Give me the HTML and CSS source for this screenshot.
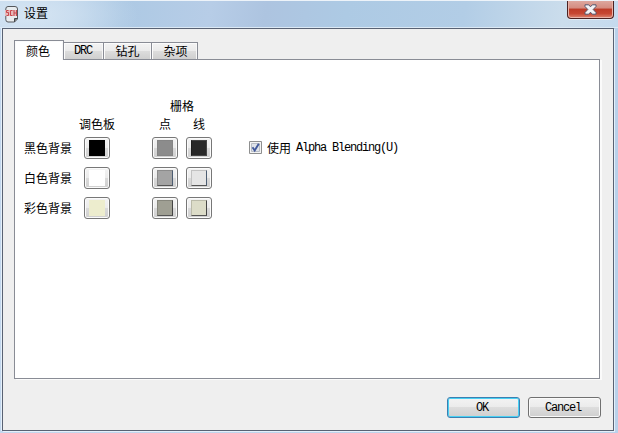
FILE: index.html
```html
<!DOCTYPE html>
<html lang="zh-CN">
<head>
<meta charset="utf-8">
<title>设置</title>
<link rel="stylesheet" href="styles.css">
</head>
<body>
<div class="window">
  <header class="titlebar">
    <svg class="app-icon" width="13" height="17" viewBox="0 0 13 17">
      <path d="M3 .5h7Q12.500.5 12.500 3v10l-3 3H3Q.8 16 .8 13.500V3Q.8.5 3 .5z" fill="#e9ecee" stroke="#55585c"/>
      <path d="M12.500 12.500H9.500V16" fill="#777" stroke="#44474a"/>
      <path d="M0 4h12v6H0z" fill="#e6b8b8"/>
      <path d="M3.500 4.500h-2v2h2v3h-2M7.500 4.500h-2v5h2M9 4v6M11.500 4v6M9 7h2.500" fill="none" stroke="#c9474c"/>
    </svg>
    <h1 class="title">设置</h1>
    <button class="close" aria-label="关闭">
      <svg width="13" height="11" viewBox="0 0 13 11">
        <path d="M1 .8h3.700l1.800 2 1.800-2H12v1.700L9.200 5.500 12 8.500v1.700H8.300l-1.800-2-1.800 2H1V8.500l2.800-3L1 2.500z" fill="#f4f4f6" stroke="#54566b"/>
      </svg>
    </button>
  </header>
  <main class="client">
    <nav class="tabs">
      <button class="tab active">颜色</button>
      <button class="tab drc">DRC</button>
      <button class="tab">钻孔</button>
      <button class="tab misc">杂项</button>
    </nav>
    <section class="panel">
      <div class="colors">
        <span class="group">栅格</span>
        <span class="head palette">调色板</span><span class="head dots">点</span><span class="head lines">线</span>
        <span class="name">黑色背景</span>
        <button class="pick base"><i class="swatch black"></i></button>
        <button class="pick dots"><i class="swatch gray"></i></button>
        <button class="pick lines"><i class="swatch dark"></i></button>
        <span class="name">白色背景</span>
        <button class="pick base"><i class="swatch white"></i></button>
        <button class="pick dots"><i class="swatch silver edged tint"></i></button>
        <button class="pick lines"><i class="swatch pale edged tint"></i></button>
        <span class="name">彩色背景</span>
        <button class="pick base"><i class="swatch cream"></i></button>
        <button class="pick dots"><i class="swatch olive edged"></i></button>
        <button class="pick lines"><i class="swatch sand edged"></i></button>
      </div>
      <label class="option">
        <svg class="check" width="13" height="13" viewBox="0 0 13 13">
          <path d="M.5.500h12v12H.5z" fill="#f4f4f4" stroke="#8e8f8f"/>
          <path d="M2.500 2.500h8v8h-8z" fill="#dfe3e9" stroke="#b8bdc5"/>
          <path d="M3.500 6.200l2.200 3.300L9.800 2.800" fill="none" stroke="#42599b" stroke-width="1.900"/>
        </svg>
        <span>使用</span><span class="latin">Alpha Blending(U)</span>
      </label>
    </section>
    <footer class="actions">
      <button class="action default">OK</button>
      <button class="action">Cancel</button>
    </footer>
  </main>
</div>
</body>
</html>
```
FILE: styles.css
```css
* { box-sizing: border-box; }
body { margin: 0; }
button { margin: 0; padding: 0; font: inherit; color: inherit; }
.window {
  width: 618px; height: 433px; overflow: hidden;
  padding: 0 4px 2px 2px;
  border-top: 1px solid #edf3f9;
  background: linear-gradient(90deg, #c3d7ee, #b9d1ea);
  font: 12px/18px "Noto Sans CJK SC", sans-serif;
  color: #000;
}
.titlebar {
  display: flex; height: 27px; margin: 0 -4px 0 -2px; padding-left: 5px;
  border-bottom: 1px solid #dce9f5;
  background:
    radial-gradient(ellipse 110px 45px at 28px 14px, #d6e5f3 0, rgba(211, 227, 242, .75) 40%, rgba(211, 227, 242, 0) 100%),
    linear-gradient(98deg, #b9d3ea 0, #adc9e4 20%, #b7cde7 34%, #adc4e0 43%, #adcae4 56%, #b2cde6 75%, #cbddec 91%, #c5daee 100%);
}
.app-icon { margin-top: 5px; }
.title { margin: 3px 0 0 6px; font-size: 12px; font-weight: normal; line-height: 18px; }
.close {
  display: flex; justify-content: center; width: 47px; height: 19px;
  margin: -1px 4px 0 auto; padding-top: 4px;
  border: 1px solid #4b2222; border-top: 0; border-radius: 0 0 4px 4px;
  background: linear-gradient(#dfaba2 0, #d48c80 45%, #bd3c28 50%, #c74732 75%, #dc8570 100%);
  box-shadow: inset 0 0 0 1px #e9b3a8, 0 1px 0 #e2edf5;
}
.client {
  display: flex; flex-direction: column; width: 612px; height: 403px;
  padding: 11px 12px 11px 11px;
  border: 1px solid #596273;
  background: #efefef;
  box-shadow: 1px 1px 0 #e5f0fa, -1px 0 0 #e5f0fa;
}
.tabs { display: flex; align-items: flex-end; height: 20px; margin-bottom: -1px; z-index: 1; }
.tab {
  width: 48px; height: 18px; line-height: 16px;
  border: 1px solid #898c95; border-left: 0;
  background: linear-gradient(#f3f3f3 0, #ebebeb 48%, #dddddd 50%, #cfcfcf 100%);
  box-shadow: inset 1px 1px 0 #fbfbfb, inset -1px 0 0 #f7f7f7;
}
.tab.active {
  width: 50px; height: 20px; padding-right: 2px; line-height: 18px;
  border: 1px solid #898c95; border-bottom: 0;
  background: #fff;
}
.tab.drc { width: 40px; padding-right: 1px; }
.tab.misc { width: 46px; padding-left: 2px; }
.drc, .latin, .action { font-family: "Liberation Mono", monospace; font-size: 12px; letter-spacing: -1.2px; }
.panel {
  display: flex; width: 586px; height: 320px; flex: none;
  padding: 37px 0 0 9px;
  border: 1px solid #898c95;
  background: #fff;
  box-shadow: 2px 1px 0 #fbfbfb;
}
.colors {
  display: grid; align-content: start; width: 225px;
  grid-template-columns: 60px 68px 34px 63px;
  grid-template-rows: 18px 18px 30px 30px 30px;
}
.group { grid-column: 3 / 5; width: 60px; text-align: center; }
.head { width: 26px; text-align: center; }
.head.palette { grid-column: 2; width: 38px; margin-left: -6px; }
.name { grid-column: 1; padding-top: 6px; }
.pick {
  width: 26px; height: 22px; margin-top: 4px; padding: 2px 4px;
  border: 1px solid #777; border-radius: 3px;
  background: linear-gradient(#f3f3f3 0, #ebebeb 50%, #dadada 52%, #cfcfcf 100%);
  box-shadow: inset 0 0 0 1px #fbfbfb;
}
.swatch { display: block; width: 16px; height: 16px; }
.black { background: #000; }
.white { background: #fff; }
.cream { background: #ededce; }
.gray { background: #8c8c8c; border: 1px solid #858585; }
.dark { background: #282828; border: 1px solid #444; border-left-color: #1d1d1d; }
.silver { background: #a4a4a4; }
.pale { background: #e5e5e5; }
.olive { background: #9f9f93; }
.sand { background: #dcdcc8; }
.edged { border: 1px solid rgba(0, 0, 0, .15); border-right-color: #444; border-bottom-color: #555; }
.tint { border-right-color: #4c5d72; }
.option { display: flex; align-items: flex-start; height: 18px; margin-top: 42px; }
.check { margin: 2px 5px 0 0; }
.option .latin { margin-left: 5px; }
.actions { display: flex; justify-content: flex-end; gap: 8px; margin-top: 18px; }
.action {
  width: 73px; height: 21px; padding: 1px 3px 0 0; line-height: 18px;
  border: 1px solid #707070; border-radius: 3px;
  background: linear-gradient(#f3f3f3 0, #ebebeb 48%, #dddddd 50%, #cfcfcf 100%);
  box-shadow: inset 0 0 0 1px #fafafa;
}
.action.default { border-color: #3c7fb1; box-shadow: inset 0 0 0 1px #48d0f3; }
```
